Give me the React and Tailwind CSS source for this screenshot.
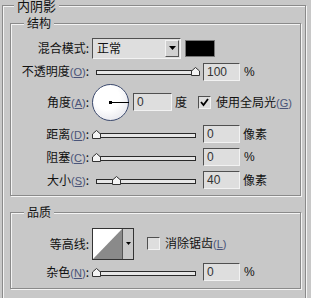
import React from 'react';

const etched = 'border border-[#8a8a8a] shadow-[inset_1px_1px_0_#f4f4f4,1px_1px_0_#f4f4f4]';
const sunken = 'border border-t-[#505050] border-l-[#505050] border-r-[#f2f2f2] border-b-[#f2f2f2] bg-[#dedede]';

function Key({ k }) {
  return (
    <span className="text-[11px] text-[#4a5478] [font-family:'Liberation_Sans',sans-serif]">
      (<span className="underline underline-offset-1">{k}</span>)
    </span>
  );
}

function Label({ children }) {
  return <div className="w-[78px] shrink-0 text-right leading-none whitespace-nowrap">{children}</div>;
}

function Thumb() {
  return (
    <svg width="9" height="9" viewBox="0 0 9 9">
      <polygon points="0.5,8.5 0.5,4 4.5,0.5 8.5,4 8.5,8.5" fill="#f4f4f4" stroke="#333" />
    </svg>
  );
}

function Slider({ thumb }) {
  return (
    <div className="relative ml-[3px] h-[9px] w-[108px] shrink-0">
      <div className="absolute left-[4px] right-[4px] top-[3px] h-[5px] border border-[#2a2a2a] bg-[#e6e6e6]" />
      <div className={`absolute top-0 flex ${thumb}`}>
        <Thumb />
      </div>
    </div>
  );
}

function NumBox({ value, w = 'w-[37px]', ml = 'ml-[3px]' }) {
  return (
    <div className={`${ml} ${w} h-[18px] shrink-0 ${sunken} flex items-center pl-[3px] text-[12px] text-[#333] [font-family:'Liberation_Sans',sans-serif]`}>
      {value}
    </div>
  );
}

function Group({ title, className, children }) {
  return (
    <div className={`relative ${etched} ${className}`}>
      <div className="absolute left-[13px] -top-[8px] bg-[#c8c8c8] px-[3px] text-[12px] leading-[14px]">{title}</div>
      {children}
    </div>
  );
}

export default function App() {
  return (
    <div className="h-[298px] w-[311px] overflow-hidden bg-[#c8c8c8] text-[12px] text-[#111] [font-family:'Noto_Sans_CJK_SC','Liberation_Sans',sans-serif]">
      <div className={`relative ml-[2px] mt-[5px] h-[320px] w-[304px] ${etched}`}>
        <div className="absolute left-[11px] -top-[7px] bg-[#c8c8c8] px-[3px] text-[13px] leading-[14px]">内阴影</div>

        {/* 结构 */}
        <Group title="结构" className="ml-[7px] mt-[17px] h-[173px] w-[291px]">
          <div className="mt-[14px] flex h-[20px] items-center">
            <Label>混合模式:</Label>
            <div className={`ml-[3px] flex h-[21px] w-[89px] items-center ${sunken}`}>
              <span className="flex-1 pl-[4px] leading-none">正常</span>
              <div className="mr-[1px] flex h-[17px] w-[14px] items-center justify-center border border-t-[#f2f2f2] border-l-[#f2f2f2] border-r-[#555] border-b-[#555] bg-[#d0d0d0]">
                <svg width="7" height="4" viewBox="0 0 7 4"><polygon points="0,0 7,0 3.5,4" fill="#000" /></svg>
              </div>
            </div>
            <div className="ml-[4px] h-[17px] w-[30px] border border-[#777] bg-black" />
          </div>

          <div className="mt-[5px] flex h-[17px] items-center">
            <Label>不透明度<Key k="O" />:</Label>
            <Slider thumb="left-[99px]" />
            <NumBox value="100" />
            <span className="ml-[4px] [font-family:'Liberation_Sans',sans-serif]">%</span>
          </div>

          <div className="mt-[3px] flex h-[38px] items-center">
            <Label>角度<Key k="A" />:</Label>
            <div className="relative ml-[3px] h-[37px] w-[37px] shrink-0 rounded-full border border-[#3c4a6e] bg-[radial-gradient(circle_at_40%_35%,#ffffff_40%,#dcdce4)]">
              <div className="absolute left-[17px] top-[17px] h-[1px] w-[19px] bg-black" />
              <div className="absolute left-[16px] top-[16px] h-[3px] w-[3px] bg-black" />
            </div>
            <NumBox value="0" w="w-[39px]" ml="ml-[4px]" />
            <span className="ml-[3px] leading-none">度</span>
            <div className={`ml-[11px] flex h-[13px] w-[13px] items-center justify-center ${sunken}`}>
              <svg width="9" height="9" viewBox="0 0 9 9"><polyline points="1,4 3.5,7 8,1" fill="none" stroke="#000" strokeWidth="1.8" /></svg>
            </div>
            <span className="ml-[5px] leading-none whitespace-nowrap">使用全局光<Key k="G" /></span>
          </div>

          <div className="mt-[4px] flex h-[18px] items-center">
            <Label>距离<Key k="D" />:</Label>
            <Slider thumb="left-0" />
            <NumBox value="0" />
            <span className="ml-[3px] leading-none">像素</span>
          </div>

          <div className="mt-[5px] flex h-[18px] items-center">
            <Label>阻塞<Key k="C" />:</Label>
            <Slider thumb="left-0" />
            <NumBox value="0" />
            <span className="ml-[4px] [font-family:'Liberation_Sans',sans-serif]">%</span>
          </div>

          <div className="mt-[5px] flex h-[18px] items-center">
            <Label>大小<Key k="S" />:</Label>
            <Slider thumb="left-[20px]" />
            <NumBox value="40" />
            <span className="ml-[3px] leading-none">像素</span>
          </div>
        </Group>

        {/* 品质 */}
        <Group title="品质" className="ml-[7px] mt-[16px] h-[77px] w-[291px]">
          <div className="mt-[15px] flex h-[31px] items-center">
            <Label>等高线:</Label>
            <div className="ml-[3px] flex h-[32px] w-[42px] shrink-0 border border-[#333] bg-[#c8c8c8]">
              <svg width="29" height="30" viewBox="0 0 29 30" className="shrink-0">
                <rect width="29" height="30" fill="#fff" />
                <polygon points="0,30 29,0 29,30" fill="#8a8a8a" />
              </svg>
              <div className="flex flex-1 items-center justify-center border-l border-[#555]">
                <svg width="5" height="3" viewBox="0 0 5 3"><polygon points="0,0 5,0 2.5,3" fill="#000" /></svg>
              </div>
            </div>
            <div className={`ml-[13px] h-[13px] w-[13px] shrink-0 ${sunken}`} />
            <span className="ml-[5px] leading-none whitespace-nowrap">消除锯齿<Key k="L" /></span>
          </div>

          <div className="mt-[4px] flex h-[18px] items-center">
            <Label>杂色<Key k="N" />:</Label>
            <Slider thumb="left-0" />
            <NumBox value="0" />
            <span className="ml-[4px] [font-family:'Liberation_Sans',sans-serif]">%</span>
          </div>
        </Group>
      </div>
    </div>
  );
}
